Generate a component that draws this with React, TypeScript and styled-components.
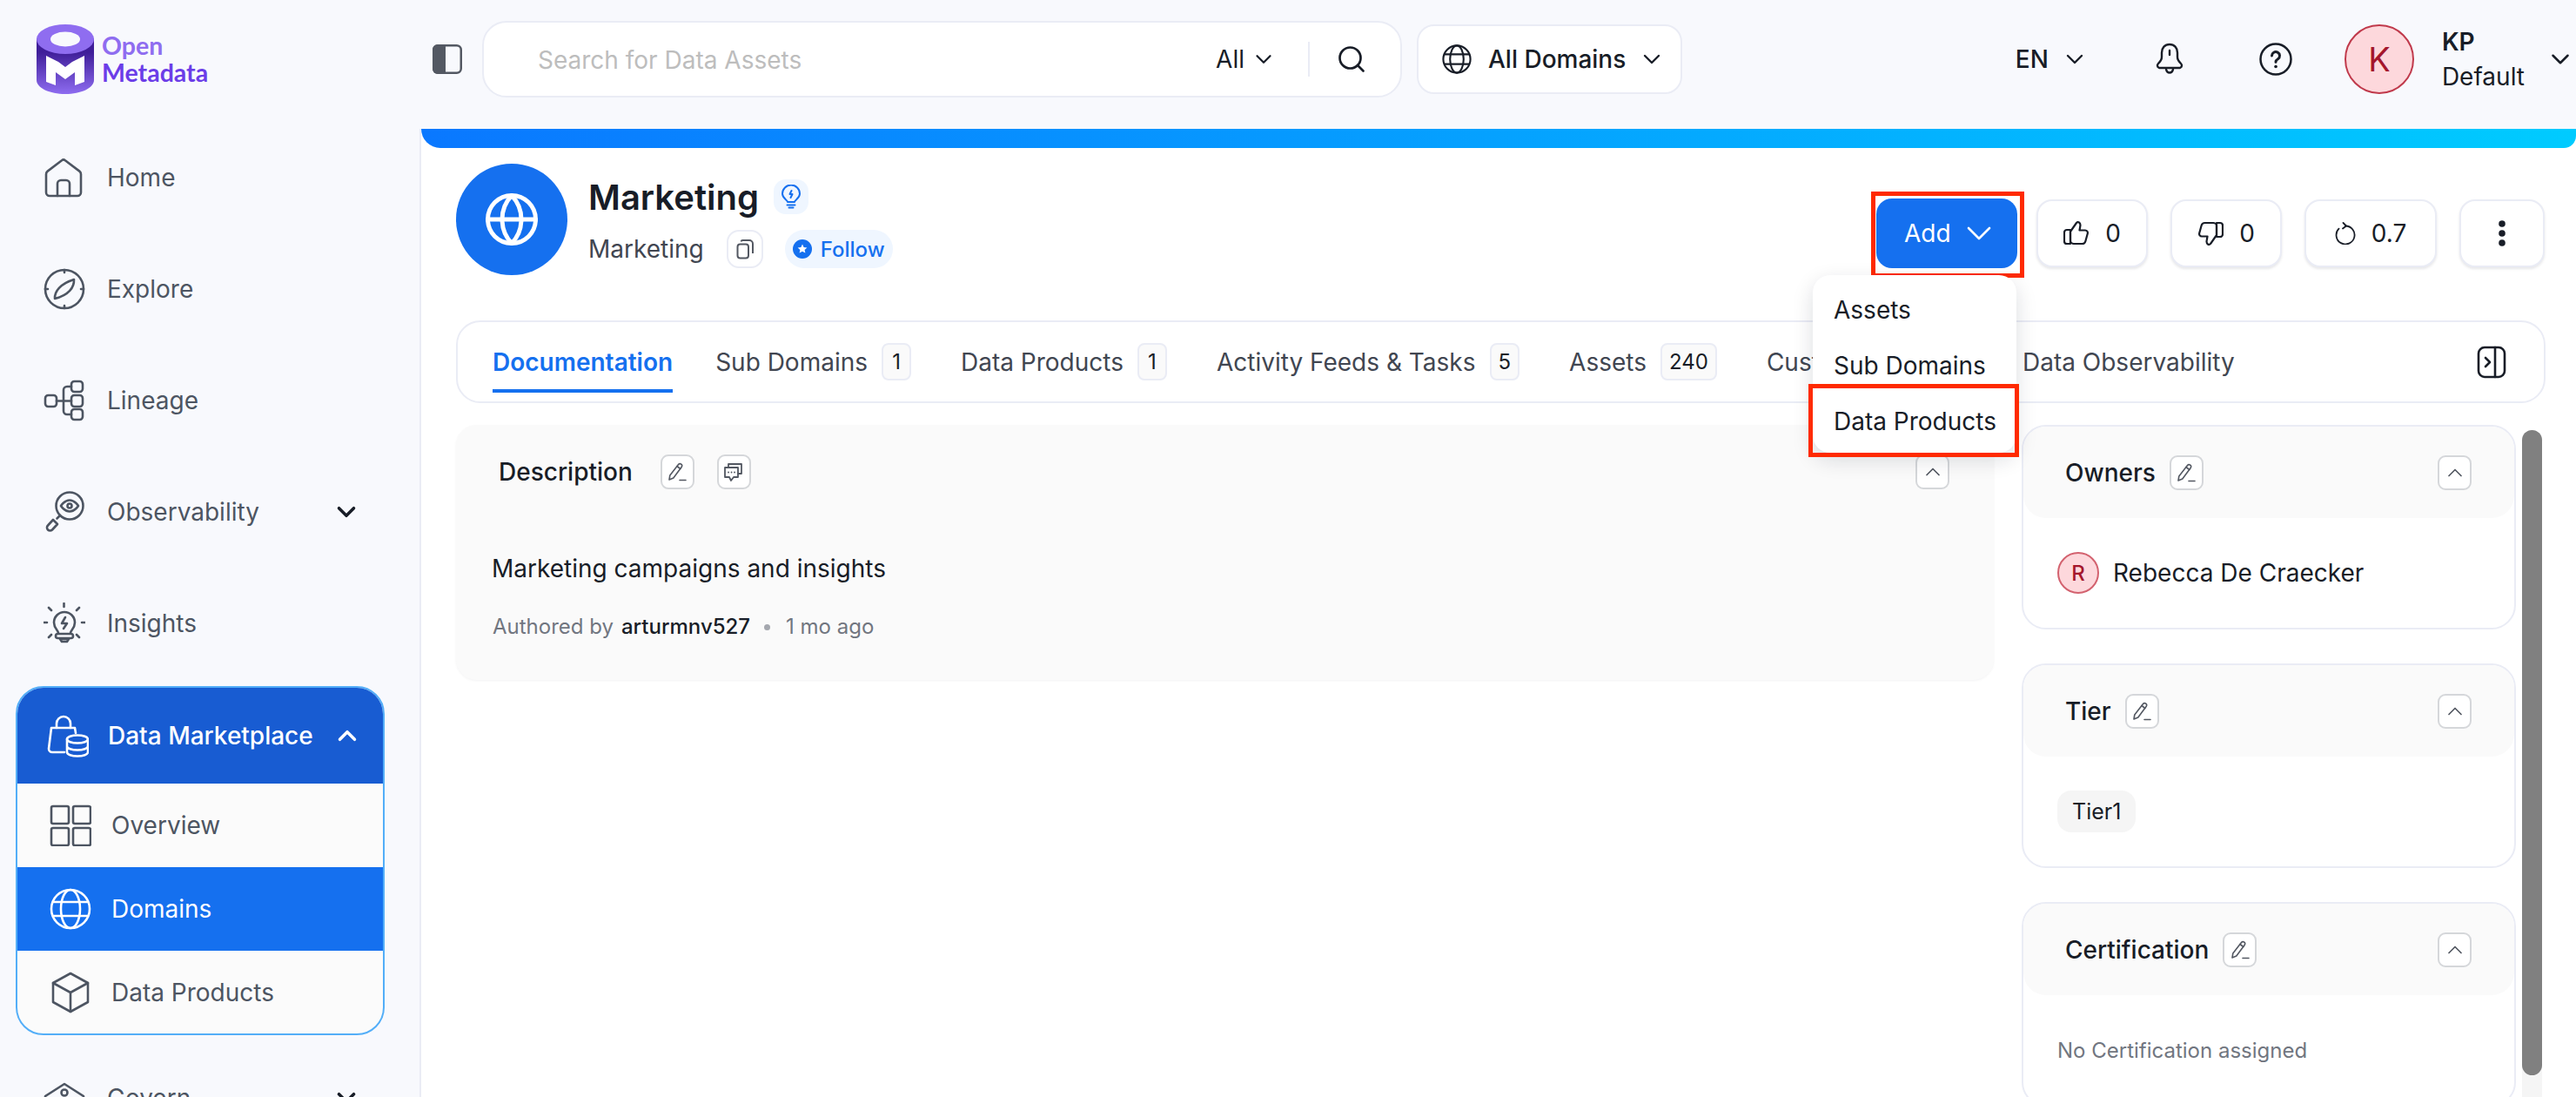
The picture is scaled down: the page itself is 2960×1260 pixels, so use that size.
import React from "react";
import styled, { createGlobalStyle } from "styled-components";
import { ChevronDown, ChevronUp, Globe, Search } from "lucide-react";

const GlobalStyle = createGlobalStyle`
  html, body {
    margin: 0;
    width: 2960px;
    height: 1260px;
    overflow: hidden;
    background: #f8f9fd;
    font-family: Inter, "Noto Sans", sans-serif;
    color: #181d27;
  }
  * { box-sizing: border-box; }
`;

const Page = styled.div`
  display: flex;
  width: 2960px;
  height: 1260px;
  overflow: hidden;
`;

/* sidebar */
const Sidebar = styled.aside`
  flex: 0 0 482px;
  padding-top: 28px;
`;

const LogoRow = styled.div`
  display: flex;
  align-items: center;
  gap: 9px;
  height: 80px;
  margin: 0 0 32px 42px;
`;

const LogoText = styled.div`
  font-family: Lato, Inter, sans-serif;
  font-weight: 700;
  font-size: 28.5px;
  line-height: 31px;
  color: #6b3de8;
  span { display: block; color: #8f6df0; }
`;

const NavRow = styled.div<{ $drop?: number }>`
  display: flex;
  align-items: center;
  gap: 25px;
  height: 128px;
  margin-top: ${(p) => p.$drop ?? 0}px;
  padding: 0 67px 0 50px;
  font-size: 28px;
  color: #4d5562;
  svg.icon { flex: 0 0 48px; width: 48px; height: 48px; }
`;

const Caret = styled.span`
  margin-left: auto;
  flex: none;
  display: flex;
  color: #181d27;
`;

const Group = styled.div`
  margin: 8px 0 0 18px;
  width: 424px;
  height: 401px;
  border: 2px solid #53aef8;
  border-radius: 32px;
  overflow: hidden;
  background: #fbfbfb;
`;

const GroupHead = styled.div`
  display: flex;
  align-items: center;
  gap: 22px;
  height: 110px;
  padding: 0 25px 0 32px;
  background: #185cd2;
  color: #fff;
  font-size: 28px;
  font-weight: 500;
  white-space: nowrap;
  svg.icon { width: 50px; height: 50px; flex: none; }
`;

const GroupItem = styled.div<{ $active?: boolean }>`
  display: flex;
  align-items: center;
  gap: 23px;
  height: 96px;
  padding-left: 37px;
  font-size: 28px;
  background: ${(p) => (p.$active ? "#1570ef" : "transparent")};
  color: ${(p) => (p.$active ? "#fff" : "#4d5562")};
  svg.icon { width: 48px; height: 48px; flex: none; }
`;

/* top bar */
const Main = styled.div`
  flex: 1;
  min-width: 0;
  display: flex;
  flex-direction: column;
`;

const TopBar = styled.header`
  display: flex;
  align-items: center;
  height: 148px;
  padding: 0 0 12px 15px;
  flex: none;
`;

const SearchBox = styled.div`
  display: flex;
  align-items: center;
  width: 1057px;
  height: 88px;
  margin-left: 23px;
  padding: 0 38px 0 62px;
  background: #fff;
  border: 2px solid #eaecf5;
  border-radius: 28px;
`;

const Placeholder = styled.span`
  flex: 1;
  padding-top: 2px;
  font-size: 28px;
  color: #bdbdbd;
`;

const SelectLabel = styled.span<{ $gap?: number; $light?: boolean }>`
  display: flex;
  align-items: center;
  gap: ${(p) => p.$gap ?? 14}px;
  font-size: 28px;
  font-weight: ${(p) => (p.$light ? 400 : 500)};
  color: #181d27;
`;

const SearchDivider = styled.span`
  width: 2px;
  height: 40px;
  margin: 0 30px 0 36px;
  background: #eaecf5;
`;

const DomainSelect = styled.div`
  display: flex;
  align-items: center;
  gap: 19px;
  width: 305px;
  height: 80px;
  margin-left: 17px;
  padding-left: 27px;
  background: #fff;
  border: 2px solid #eaecf5;
  border-radius: 20px;
`;

const TopRight = styled.div`
  margin-left: auto;
  margin-right: 1px;
  display: flex;
  align-items: center;
  color: #181d27;
`;

const TopIcon = styled.span<{ $ml: number }>`
  display: flex;
  margin-left: ${(p) => p.$ml}px;
`;

const UserAvatar = styled.div`
  display: flex;
  align-items: center;
  justify-content: center;
  width: 80px;
  height: 80px;
  margin-left: 60px;
  border-radius: 50%;
  background: #fdd8dc;
  border: 2px solid #c0394b;
  color: #a4162c;
  font-size: 38px;
`;

const UserText = styled.div`
  margin-left: 32px;
  font-size: 28px;
  line-height: 40px;
  b { display: block; font-weight: 600; }
`;

/* content */
const Content = styled.main`
  flex: 1;
  min-height: 0;
  background: #fff;
  border-left: 2px solid #eaecf5;
`;

const GradientBar = styled.div`
  height: 22px;
  background: linear-gradient(90deg, #0a78ff 0%, #00cbff 100%);
  border-radius: 0 0 14px 22px;
`;

const EntityHeader = styled.div`
  display: flex;
  height: 198px;
  padding: 18px 36px 0 40px;
`;

const EntityAvatar = styled.div`
  display: flex;
  align-items: center;
  justify-content: center;
  width: 128px;
  height: 128px;
  border-radius: 50%;
  background: #1570ef;
  color: #fff;
`;

const EntityText = styled.div`
  margin-left: 24px;
`;

const TitleRow = styled.div`
  display: flex;
  align-items: center;
  gap: 17px;
  height: 76px;
  font-size: 40px;
  font-weight: 600;
  color: #181d27;
`;

const BulbBadge = styled.span`
  display: flex;
  align-items: center;
  justify-content: center;
  width: 40px;
  height: 40px;
  border-radius: 14px;
  background: #eff6ff;
  color: #1570ef;
`;

const SubRow = styled.div`
  display: flex;
  align-items: center;
  height: 44px;
  font-size: 28px;
  color: #414651;
`;

const CopyButton = styled.span`
  display: flex;
  align-items: center;
  justify-content: center;
  width: 42px;
  height: 44px;
  margin-left: 26px;
  border: 2px solid #eaecf5;
  border-radius: 14px;
  color: #535862;
`;

const FollowChip = styled.span`
  display: flex;
  align-items: center;
  gap: 10px;
  height: 44px;
  margin-left: 25px;
  padding: 0 9px;
  border-radius: 22px;
  background: #eff6ff;
  color: #1570ef;
  font-size: 24px;
  font-weight: 500;
`;

const Actions = styled.div`
  margin-left: auto;
  display: flex;
  align-items: center;
  gap: 26px;
  height: 80px;
  margin-top: 40px;
`;

const AddWrap = styled.div`
  position: relative;
  margin-right: -4px;
  &::after {
    content: "";
    position: absolute;
    inset: -8px -8px -11px -6px;
    border: 5px solid #ff2a00;
    pointer-events: none;
  }
`;

const AddButton = styled.div`
  display: flex;
  align-items: center;
  gap: 8px;
  width: 162px;
  height: 80px;
  padding-left: 32px;
  border-radius: 18px;
  background: #1570ef;
  color: #fff;
  font-size: 28px;
`;

const ActionButton = styled.div<{ $w: number }>`
  display: flex;
  align-items: center;
  justify-content: center;
  gap: 18px;
  width: ${(p) => p.$w}px;
  height: 78px;
  background: #fff;
  border: 2px solid #eaecf5;
  border-radius: 18px;
  box-shadow: 0 2px 3px rgba(16, 24, 40, 0.1);
  font-size: 28px;
  color: #181d27;
`;

const Menu = styled.div`
  position: absolute;
  z-index: 5;
  top: 88px;
  right: 1px;
  width: 234px;
  height: 204px;
  padding-top: 8px;
  background: #fff;
  border-radius: 20px;
  box-shadow: 0 8px 24px rgba(16, 24, 40, 0.14);
`;

const MenuItem = styled.div<{ $marked?: boolean }>`
  position: relative;
  display: flex;
  align-items: center;
  height: 64px;
  padding-left: 24px;
  font-size: 28px;
  color: #181d27;
  ${(p) =>
    p.$marked &&
    `&::after {
      content: "";
      position: absolute;
      inset: -11px -3px -9px -5px;
      border: 5px solid #ff2a00;
    }`}
`;

const TabBar = styled.nav`
  display: flex;
  align-items: center;
  gap: 57px;
  height: 95px;
  margin: 0 35px 0 40px;
  padding: 0 43px 0 40px;
  background: #fff;
  border: 2px solid #eaecf5;
  border-radius: 28px;
`;

const Tab = styled.div<{ $active?: boolean; $pull?: number }>`
  position: relative;
  display: flex;
  align-items: center;
  gap: 16px;
  margin-right: ${(p) => p.$pull ?? 0}px;
  font-size: 28px;
  white-space: nowrap;
  color: ${(p) => (p.$active ? "#1570ef" : "#414651")};
  font-weight: ${(p) => (p.$active ? 600 : 400)};
  ${(p) =>
    p.$active &&
    `&::after {
      content: "";
      position: absolute;
      left: 0;
      right: 0;
      bottom: -18px;
      height: 4px;
      background: #1570ef;
    }`}
`;

const TabCount = styled.span`
  display: flex;
  align-items: center;
  justify-content: center;
  min-width: 34px;
  height: 43px;
  padding: 0 8px;
  background: #fafafa;
  border: 2px solid #eaecf5;
  border-radius: 8px;
  font-size: 24px;
  color: #181d27;
`;

const PanelToggle = styled.span`
  margin-left: auto;
  display: flex;
  color: #181d27;
`;

const Columns = styled.div`
  display: flex;
  align-items: flex-start;
  margin: 25px 0 0 40px;
`;

const DescriptionCard = styled.section`
  flex: 0 0 1767px;
  height: 293px;
  background: #fafafa;
  border-radius: 24px;
  box-shadow: 0 1px 3px rgba(16, 24, 40, 0.05);
`;

const CardHead = styled.div`
  display: flex;
  align-items: center;
  height: 108px;
  padding: 0 51px 0 49px;
`;

const CardTitle = styled.span`
  font-size: 28px;
  font-weight: 500;
  color: #181d27;
`;

const SmallButton = styled.span<{ $gap?: number; $right?: boolean }>`
  display: flex;
  align-items: center;
  justify-content: center;
  width: 39px;
  height: 40px;
  margin-left: ${(p) => (p.$right ? "auto" : `${p.$gap ?? 32}px`)};
  background: #fff;
  border: 2px solid #d5d7da;
  border-radius: 9px;
  color: #535862;
`;

const DescriptionText = styled.div`
  margin: 39px 41px 0;
  font-size: 28px;
  line-height: 36px;
  color: #181d27;
`;

const AuthorLine = styled.div`
  display: flex;
  align-items: center;
  margin: 34px 42px 0;
  font-size: 24px;
  line-height: 30px;
  color: #717680;
  b { margin-left: 9px; font-weight: 500; color: #181d27; }
  i { width: 7px; height: 7px; margin: 0 18px 0 16px; border-radius: 50%; background: #a4a7ae; }
`;

const SideColumn = styled.div`
  flex: 0 0 568px;
  margin-left: 32px;
  display: flex;
  flex-direction: column;
  gap: 39px;
`;

const SideCard = styled.section`
  height: 235px;
  flex: none;
  background: #fff;
  border: 2px solid #eaecf5;
  border-radius: 28px;
`;

const SideHead = styled.div`
  display: flex;
  align-items: center;
  height: 105px;
  padding: 0 49px 0 48px;
  background: #fafafa;
  border-radius: 26px;
  ${SmallButton}:first-of-type { margin-top: -4px; }
`;

const SideBody = styled.div`
  display: flex;
  align-items: center;
  gap: 16px;
  height: 126px;
  padding-left: 39px;
  font-size: 28px;
  color: #181d27;
`;

const OwnerAvatar = styled.span`
  display: flex;
  align-items: center;
  justify-content: center;
  width: 48px;
  height: 48px;
  border-radius: 50%;
  background: #fdd8dc;
  border: 2px solid #d3626f;
  color: #a4162c;
  font-size: 24px;
  font-weight: 500;
`;

const TierTag = styled.span`
  display: flex;
  align-items: center;
  height: 48px;
  padding: 0 17px;
  background: #f5f5f5;
  border-radius: 16px;
  font-size: 25px;
  color: #181d27;
`;

const EmptyNote = styled.span`
  font-size: 24px;
  color: #717680;
`;

const ScrollTrack = styled.div`
  flex: 0 0 23px;
  height: 800px;
  margin: 6px 0 0 7px;
  background: #f5f5f5;
  border-radius: 12px 12px 0 0;
`;

const ScrollThumb = styled.div`
  height: 741px;
  background: #808080;
  border-radius: 12px;
`;

/* drawings */
const Line = (p: React.SVGProps<SVGSVGElement>) => (
  <svg
    viewBox="0 0 48 48"
    fill="none"
    stroke="currentColor"
    strokeWidth={2.6}
    strokeLinecap="round"
    strokeLinejoin="round"
    className="icon"
    {...p}
  />
);

const LogoMark = () => (
  <svg width="66" height="80" viewBox="0 0 66 80">
    <defs>
      <linearGradient id="logoBody" x1="0" y1="0" x2="0" y2="1">
        <stop offset="0.25" stopColor="#3f1e99" />
        <stop offset="1" stopColor="#8e6cf0" />
      </linearGradient>
    </defs>
    <path d="M0 16v48c0 9 15 16 33 16s33-7 33-16V16Z" fill="url(#logoBody)" />
    <ellipse cx="33" cy="17" rx="33" ry="17" fill="#8f6df0" />
    <ellipse cx="33" cy="17" rx="17" ry="8.5" fill="#f8f9fd" />
    <path d="M11 36l14 7 8 6 8-6 14-7v30l-11 4V55l-11 8-11-8v15l-11-4Z" fill="#fff" />
  </svg>
);

const HomeIcon = () => (
  <Line>
    <path d="M3 20c0-1.400.6-2.600 1.700-3.400L21 4.200a3 3 0 0 1 3.900 0l16.400 12.400c1.100.8 1.700 2 1.700 3.400V41a4 4 0 0 1-4 4H7a4 4 0 0 1-4-4Z" />
    <path d="M16 45V31a4 4 0 0 1 4-4h6a4 4 0 0 1 4 4v14" />
  </Line>
);

const CompassIcon = () => (
  <Line>
    <circle cx="24" cy="24" r="22" />
    <path d="M24 2v3M24 43v3M2 24h3M43 24h3" />
    <path d="M13 35c-.5-8 6-17 22-22 .500 9-6 18-22 22Z" />
  </Line>
);

const LineageIcon = () => (
  <Line>
    <rect x="2" y="18" width="13" height="13" rx="3.500" />
    <rect x="32" y="2" width="13" height="12" rx="3.500" />
    <rect x="32" y="18" width="13" height="13" rx="3.500" />
    <rect x="32" y="34" width="13" height="12" rx="3.500" />
    <path d="M15 24.500h17M23 24.500V12a4 4 0 0 1 4-4h5M23 24.500V36a4 4 0 0 0 4 4h5" />
  </Line>
);

const ObservabilityIcon = () => (
  <Line>
    <circle cx="30" cy="17" r="15.500" />
    <path d="M20 17s4-6.500 10-6.500S40 17 40 17s-4 6.500-10 6.500S20 17 20 17Z" />
    <circle cx="30" cy="17" r="2.500" />
    <path d="M19 28l-3.500 3.500M11 33l5 5-6 6.500a3.200 3.200 0 0 1-5-5Z" />
  </Line>
);

const InsightIcon = () => (
  <Line>
    <path d="M17 35c0-3-5-5-5-12a12 12 0 0 1 24 0c0 7-5 9-5 12" />
    <rect x="14" y="36" width="20" height="5" rx="2.500" />
    <path d="M19 42h10l-2 3h-6Z" />
    <path d="M25 17l-4 7h6l-4 6" />
    <path d="M23.500 1v4M6 6l3 3M41 6l-3 3M0 23h4M44 23h4M6 40l3-3M41 40l-3-3" />
  </Line>
);

const MarketIcon = () => (
  <Line viewBox="0 0 50 50">
    <path d="M22 44H8a4 4 0 0 1-4-4l3-24h27l1 6" />
    <path d="M13 16v-5a8 8 0 0 1 16 0v5" />
    <ellipse cx="37" cy="29" rx="12" ry="4.500" />
    <path d="M25 29v15c0 2.500 5.400 4.500 12 4.500s12-2 12-4.500V29M25 37c0 2.500 5.400 4.500 12 4.500s12-2 12-4.500" />
  </Line>
);

const GridIcon = () => (
  <Line>
    <rect x="2" y="2" width="20" height="20" rx="2" />
    <rect x="27" y="2" width="20" height="20" rx="2" />
    <rect x="2" y="27" width="20" height="20" rx="2" />
    <rect x="27" y="27" width="20" height="20" rx="2" />
  </Line>
);

const GlobeLines = ({ size = 48, sw = 2.6 }: { size?: number; sw?: number }) => (
  <Line width={size} height={size} strokeWidth={sw}>
    <circle cx="24" cy="24" r="22" />
    <ellipse cx="24" cy="24" rx="11" ry="22" />
    <path d="M4.500 16h39M4.500 32h39" />
  </Line>
);

const CubeIcon = () => (
  <Line>
    <path d="M24 2l20 11v22L24 46 4 35V13Z" />
    <path d="M4 13l20 11 20-11M24 24v22" />
  </Line>
);

const GovernIcon = () => (
  <Line>
    <path d="M2 22L24 8l22 14v6H2Z" />
    <circle cx="24" cy="18" r="3.500" />
  </Line>
);

const PanelLeft = () => (
  <svg width="34" height="34" viewBox="0 0 34 34">
    <rect x="1.250" y="1.250" width="31.500" height="31.500" rx="5" fill="none" stroke="#535862" strokeWidth="2.500" />
    <path d="M6 0h9v34H6a6 6 0 0 1-6-6V6a6 6 0 0 1 6-6Z" fill="#535862" />
  </svg>
);

const BellIcon = () => (
  <svg width="36" height="38" viewBox="0 0 36 38" fill="none" stroke="currentColor" strokeWidth="2.400" strokeLinecap="round" strokeLinejoin="round">
    <path d="M18 2c-5.500 0-9 4-9 9.500v5c0 3-1.500 5-4 7.500-1.500 1.500-1.500 4 1 5h24c2.500-1 2.500-3.500 1-5-2.500-2.500-4-4.500-4-7.500v-5C27 6 23.500 2 18 2Z" />
    <path d="M18 9v5M14 30.500c.5 2.500 2 4 4 4s3.500-1.500 4-4" />
  </svg>
);

const HelpIcon = () => (
  <svg width="38" height="38" viewBox="0 0 38 38" fill="none" stroke="currentColor" strokeLinecap="round" strokeLinejoin="round">
    <circle cx="19" cy="19" r="17.500" strokeWidth="2.500" />
    <path d="M14.500 15a4.500 4.500 0 1 1 7 3.800c-1.600 1-2.500 1.800-2.500 3.400" strokeWidth="3" />
    <path d="M19 27.500h.1" strokeWidth="3.600" />
  </svg>
);

const CopyIcon = () => (
  <svg width="20" height="23" viewBox="0 0 20 23" fill="none" stroke="currentColor" strokeWidth="2" strokeLinejoin="round">
    <rect x="1.500" y="5.500" width="12.500" height="16" rx="3" />
    <path d="M5.500 2.500A2 2 0 0 1 7.500 1h7.500a4 4 0 0 1 4 4v11" />
  </svg>
);

const ThreadIcon = () => (
  <svg width="24" height="26" viewBox="0 0 24 26" fill="none" stroke="currentColor" strokeWidth="1.800" strokeLinejoin="round" strokeLinecap="round">
    <path d="M2 8h15v11H12l-3 4-2-4H2Z" />
    <path d="M6 8V4h15v11h-4" />
    <path d="M6 13.500h.1M9.500 13.500h.1M13 13.500h.1" />
  </svg>
);

const BulbSmall = () => (
  <svg width="24" height="28" viewBox="0 0 24 28" fill="none" stroke="currentColor" strokeWidth="2" strokeLinecap="round" strokeLinejoin="round">
    <path d="M8 20c0-2.500-6-4-6-9.500a10 10 0 0 1 20 0C22 16 16 17.500 16 20Z" />
    <path d="M7.500 23.500h9M9.500 26.500h5M12.500 7l-2 4h3l-2 4" />
  </svg>
);

const FollowIcon = () => (
  <svg width="22" height="22" viewBox="0 0 22 22">
    <circle cx="11" cy="11" r="11" fill="#1570ef" />
    <path d="M11 5.500l1.600 3.500 3.800.4-2.800 2.500.8 3.700-3.400-1.900-3.400 1.900.8-3.700-2.800-2.500 3.800-.4Z" fill="#fff" />
  </svg>
);

const PanelRightIcon = () => (
  <svg width="34" height="38" viewBox="0 0 34 38" fill="none" stroke="currentColor" strokeWidth="2.600" strokeLinecap="round" strokeLinejoin="round">
    <rect x="2" y="2" width="30" height="34" rx="7" />
    <path d="M21 2v34M10 14l5 5-5 5" />
  </svg>
);

const ThumbUpIcon = ({ flip }: { flip?: boolean }) => (
  <svg width="30" height="30" viewBox="0 0 30 30" fill="none" stroke="currentColor" strokeWidth="2.200" strokeLinecap="round" strokeLinejoin="round" transform={flip ? "rotate(180)" : undefined}>
    <path d="M8 11H4a3 3 0 0 0-3 3v10a3 3 0 0 0 3 3h4Z" />
    <path d="M8 13l7-10c.6-.9 2-1.200 3-.5 1.500 1 1.700 3 1.200 5l-.7 4h6.500c2 0 3.300 1.800 2.800 3.700l-2.500 9c-.5 1.800-2 2.800-3.800 2.800H12c-2 0-4-1.500-4-3.500Z" />
  </svg>
);

const VersionIcon = () => (
  <svg width="24" height="26" viewBox="0 0 24 26" fill="none" stroke="currentColor" strokeWidth="1.800" strokeLinecap="round" strokeLinejoin="round">
    <path d="M12 4.500a10.500 10.500 0 1 1-7.500 3.200" />
    <path d="M9.500 1l3.500 3.500L9 7.500" />
  </svg>
);

const PencilIcon = () => (
  <svg width="22" height="22" viewBox="0 0 22 22" fill="none" stroke="currentColor" strokeWidth="1.600" strokeLinecap="round" strokeLinejoin="round">
    <path d="M2 20l.8-5L12.500 2.500a2.300 2.300 0 0 1 3.200-.3 2.300 2.300 0 0 1 .4 3.200L6.800 18Z" />
    <path d="M11 4.500l3.800 3M14 20.500h7" />
  </svg>
);

const MoreDots = () => (
  <svg width="10" height="30" viewBox="0 0 10 30" fill="#181d27">
    <circle cx="5" cy="4" r="3.800" />
    <circle cx="5" cy="15" r="3.800" />
    <circle cx="5" cy="26" r="3.800" />
  </svg>
);

const Edit = ({ gap }: { gap?: number }) => (
  <SmallButton $gap={gap}>
    <PencilIcon />
  </SmallButton>
);

const Collapse = () => (
  <SmallButton $right>
    <ChevronUp size={28} strokeWidth={1.500} />
  </SmallButton>
);

const navItems = [
  { label: "Home", icon: <HomeIcon /> },
  { label: "Explore", icon: <CompassIcon /> },
  { label: "Lineage", icon: <LineageIcon /> },
  { label: "Observability", icon: <ObservabilityIcon />, caret: true },
  { label: "Insights", icon: <InsightIcon /> },
];

const tabs = [
  { label: "Sub Domains", count: "1" },
  { label: "Data Products", count: "1" },
  { label: "Activity Feeds & Tasks", count: "5" },
  { label: "Assets", count: "240" },
  { label: "Custom Properties", pull: -9 },
  { label: "Data Observability" },
];

export default function App() {
  return (
    <Page>
      <GlobalStyle />
      <Sidebar>
        <LogoRow>
          <LogoMark />
          <LogoText>
            <span>Open</span>
            Metadata
          </LogoText>
        </LogoRow>
        {navItems.map((item) => (
          <NavRow key={item.label}>
            {item.icon}
            {item.label}
            {item.caret && (
              <Caret>
                <ChevronDown size={34} strokeWidth={2.500} />
              </Caret>
            )}
          </NavRow>
        ))}
        <Group>
          <GroupHead>
            <MarketIcon />
            Data Marketplace
            <Caret>
              <ChevronUp size={34} strokeWidth={2.500} color="#fff" />
            </Caret>
          </GroupHead>
          <GroupItem>
            <GridIcon />
            Overview
          </GroupItem>
          <GroupItem $active>
            <GlobeLines />
            Domains
          </GroupItem>
          <GroupItem>
            <CubeIcon />
            Data Products
          </GroupItem>
        </Group>
        <NavRow $drop={8}>
          <GovernIcon />
          Govern
          <Caret>
            <ChevronDown size={34} strokeWidth={2.500} />
          </Caret>
        </NavRow>
      </Sidebar>

      <Main>
        <TopBar>
          <PanelLeft />
          <SearchBox>
            <Placeholder>Search for Data Assets</Placeholder>
            <SelectLabel $gap={7} $light>
              All
              <ChevronDown size={30} strokeWidth={1.800} />
            </SelectLabel>
            <SearchDivider />
            <Search size={36} strokeWidth={1.800} color="#181d27" />
          </SearchBox>
          <DomainSelect>
            <GlobeLines size={34} sw={3} />
            <SelectLabel>
              All Domains
              <ChevronDown size={32} strokeWidth={1.800} />
            </SelectLabel>
          </DomainSelect>
          <TopRight>
            <SelectLabel>
              EN
              <ChevronDown size={32} strokeWidth={1.800} />
            </SelectLabel>
            <TopIcon $ml={75}>
              <BellIcon />
            </TopIcon>
            <TopIcon $ml={85}>
              <HelpIcon />
            </TopIcon>
            <UserAvatar>K</UserAvatar>
            <UserText>
              <b>KP</b>
              Default
            </UserText>
            <TopIcon $ml={24}>
              <ChevronDown size={34} strokeWidth={1.800} />
            </TopIcon>
          </TopRight>
        </TopBar>

        <Content>
          <GradientBar />
          <EntityHeader>
            <EntityAvatar>
              <Globe size={66} strokeWidth={1.800} />
            </EntityAvatar>
            <EntityText>
              <TitleRow>
                Marketing
                <BulbBadge>
                  <BulbSmall />
                </BulbBadge>
              </TitleRow>
              <SubRow>
                Marketing
                <CopyButton>
                  <CopyIcon />
                </CopyButton>
                <FollowChip>
                  <FollowIcon />
                  Follow
                </FollowChip>
              </SubRow>
            </EntityText>
            <Actions>
              <AddWrap>
                <AddButton>
                  Add
                  <ChevronDown size={48} strokeWidth={1.300} />
                </AddButton>
                <Menu>
                  <MenuItem>Assets</MenuItem>
                  <MenuItem>Sub Domains</MenuItem>
                  <MenuItem $marked>Data Products</MenuItem>
                </Menu>
              </AddWrap>
              <ActionButton $w={128}>
                <ThumbUpIcon />0
              </ActionButton>
              <ActionButton $w={128}>
                <ThumbUpIcon flip />0
              </ActionButton>
              <ActionButton $w={152}>
                <VersionIcon />
                0.7
              </ActionButton>
              <ActionButton $w={98}>
                <MoreDots />
              </ActionButton>
            </Actions>
          </EntityHeader>

          <TabBar>
            <Tab $active $pull={-8}>
              Documentation
            </Tab>
            {tabs.map((tab) => (
              <Tab key={tab.label} $pull={tab.pull}>
                {tab.label}
                {tab.count && <TabCount>{tab.count}</TabCount>}
              </Tab>
            ))}
            <PanelToggle>
              <PanelRightIcon />
            </PanelToggle>
          </TabBar>

          <Columns>
            <DescriptionCard>
              <CardHead>
                <CardTitle>Description</CardTitle>
                <Edit />
                <SmallButton $gap={26}>
                  <ThreadIcon />
                </SmallButton>
                <Collapse />
              </CardHead>
              <DescriptionText>Marketing campaigns and insights</DescriptionText>
              <AuthorLine>
                Authored by <b>arturmnv527</b>
                <i />1 mo ago
              </AuthorLine>
            </DescriptionCard>

            <SideColumn>
              <SideCard>
                <SideHead>
                  <CardTitle>Owners</CardTitle>
                  <Edit gap={16} />
                  <Collapse />
                </SideHead>
                <SideBody>
                  <OwnerAvatar>R</OwnerAvatar>
                  Rebecca De Craecker
                </SideBody>
              </SideCard>
              <SideCard>
                <SideHead>
                  <CardTitle>Tier</CardTitle>
                  <Edit gap={16} />
                  <Collapse />
                </SideHead>
                <SideBody>
                  <TierTag>Tier1</TierTag>
                </SideBody>
              </SideCard>
              <SideCard>
                <SideHead>
                  <CardTitle>Certification</CardTitle>
                  <Edit gap={16} />
                  <Collapse />
                </SideHead>
                <SideBody>
                  <EmptyNote>No Certification assigned</EmptyNote>
                </SideBody>
              </SideCard>
            </SideColumn>

            <ScrollTrack>
              <ScrollThumb />
            </ScrollTrack>
          </Columns>
        </Content>
      </Main>
    </Page>
  );
}
